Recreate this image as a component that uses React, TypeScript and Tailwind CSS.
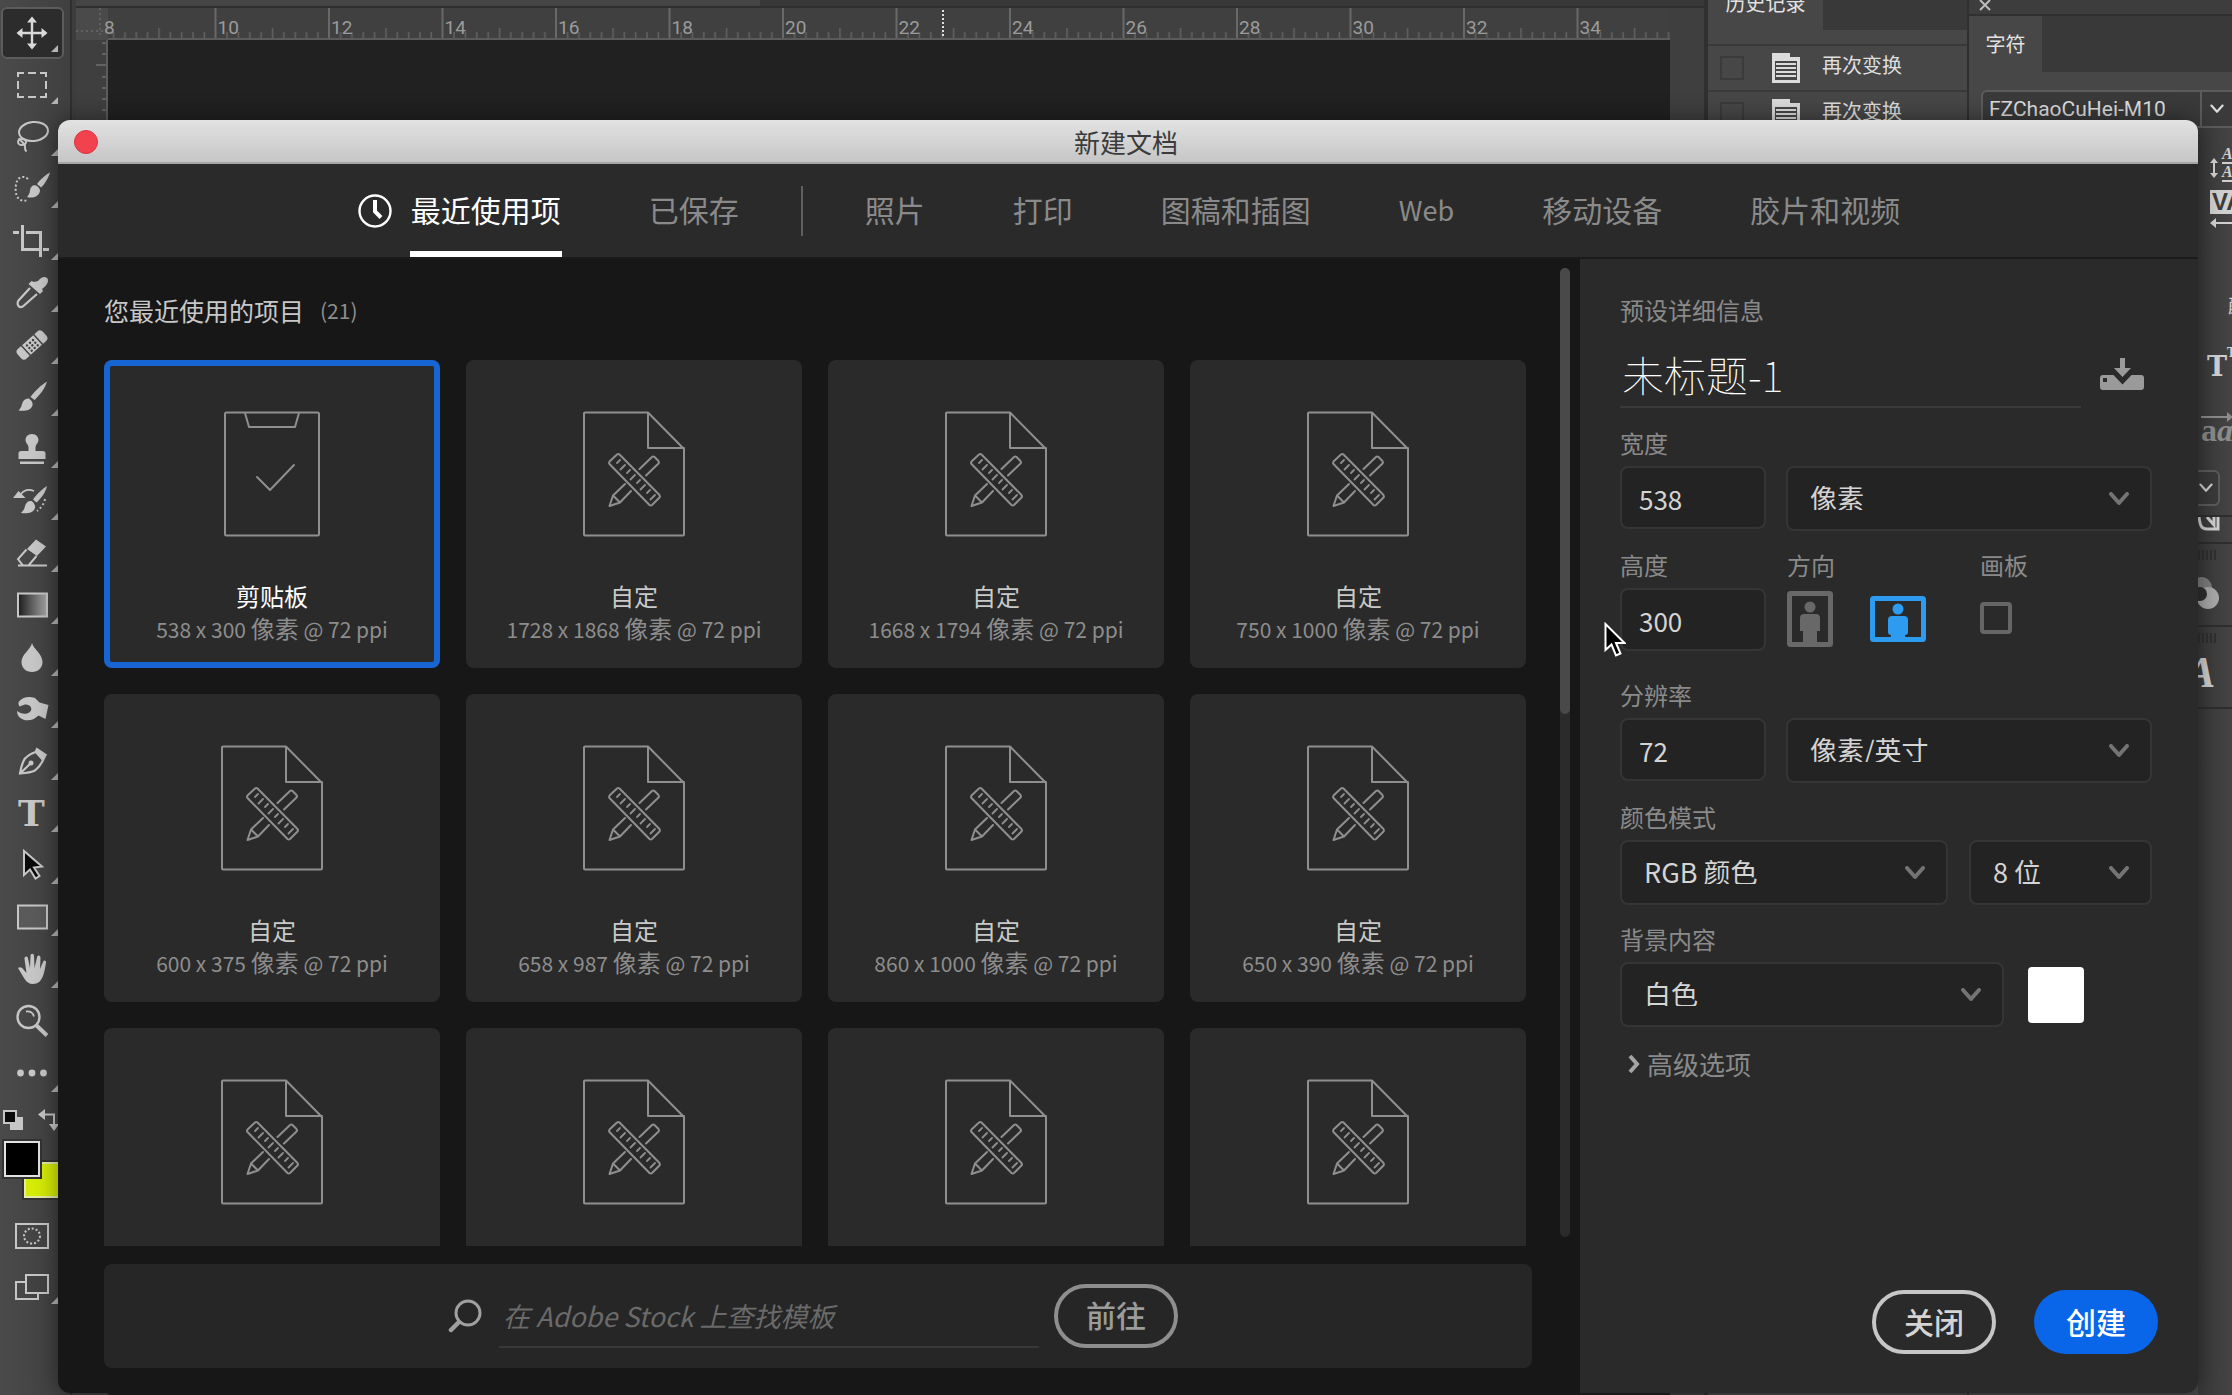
import React from "react";

const CJK = "font-['Noto_Sans_CJK_SC',sans-serif]";

/* ---------- Toolbar icons, each drawn on a 36 x 36 grid ---------- */

const brushTip = (
  <>
    <path d="M36 1.500c-5 2.500-10 7.500-13 11.500l4 3.500C31 13 34.500 6.500 36 1.500z" />
    <path d="M22 14.500c-3-1-5.500 1-6 5-.3 3-1.500 5-3 6.500 5 1.500 12 0 13-6 .2-2-1.500-4.500-4-5.500z" />
  </>
);

const toolIcons: { name: string; art: React.ReactNode }[] = [
  {
    name: "移动工具",
    art: (
      <>
        <path d="M18 4v28M4 18h28" stroke="currentColor" strokeWidth="2.400" />
        <path d="M18 1.500l5 6H13zM18 34.500l5-6H13zM2.500 18l6-5v10zM33.500 18l-6-5v10z" />
      </>
    ),
  },
  {
    name: "矩形选框工具",
    art: (
      <path
        d="M4 10V6h6M14 6h8M26 6h6v4M32 14v8M32 26v4h-6M22 30h-8M10 30H4v-4M4 22v-8"
        fill="none"
        stroke="currentColor"
        strokeWidth="2"
      />
    ),
  },
  {
    name: "套索工具",
    art: (
      <g fill="none" stroke="currentColor" strokeWidth="2">
        <ellipse cx="19.500" cy="12.500" rx="14.500" ry="9.500" transform="rotate(-6 19.500 12.500)" />
        <ellipse cx="8" cy="23" rx="4" ry="3" />
        <path d="M5 19c1 4 7 5 6 9-.3 2 0 3 1.500 4.500" />
      </g>
    ),
  },
  {
    name: "快速选择工具",
    art: (
      <>
        <path
          d="M14 8C11 5 6 5.500 3.500 9 1.500 13 1 19 2.500 24c1.500 5 6 7 11 5"
          fill="none"
          stroke="currentColor"
          strokeWidth="2"
          strokeDasharray="2 2.200"
        />
        {brushTip}
      </>
    ),
  },
  {
    name: "裁剪工具",
    art: (
      <>
        <path d="M8.500 2v24.500H26M12 9.500h14.500V34" fill="none" stroke="currentColor" strokeWidth="3" />
        <path d="M-1 8h6v3h-6zM29 25h6v3h-6z" />
      </>
    ),
  },
  {
    name: "吸管工具",
    art: (
      <>
        <path d="M24 6c3-4 7-5 9-3s1 6-2.500 9l-2.500 2 1 2-3 3L14.500 9l3-3 2.500 1z" />
        <path d="M16 13L4.500 25.500c-1.500 2-1 5 .5 6s3.500.5 5-1L23 19" fill="none" stroke="currentColor" strokeWidth="2.200" />
      </>
    ),
  },
  {
    name: "污点修复画笔工具",
    art: (
      <g transform="rotate(-42 18 18)">
        <path d="M5 11.500h4v13H5a4 4 0 0 1-4-4v-5a4 4 0 0 1 4-4zM27 11.500h4a4 4 0 0 1 4 4v5a4 4 0 0 1-4 4h-4zM10.500 11.500h15v13h-15z" />
        <g fill="#3c3c3c">
          <circle cx="14" cy="15" r="1.200" />
          <circle cx="18" cy="15" r="1.200" />
          <circle cx="22" cy="15" r="1.200" />
          <circle cx="14" cy="18.500" r="1.200" />
          <circle cx="18" cy="18.500" r="1.200" />
          <circle cx="22" cy="18.500" r="1.200" />
          <circle cx="14" cy="22" r="1.200" />
          <circle cx="18" cy="22" r="1.200" />
          <circle cx="22" cy="22" r="1.200" />
        </g>
      </g>
    ),
  },
  {
    name: "画笔工具",
    art: (
      <>
        <path d="M33 2.500C27 6 20 13 16.500 18l4 3C26 16 31.500 8.500 33 2.500z" />
        <path d="M15 19.500c-3.500-.5-6 2-7 5.500-.5 3-2 5-3.500 6.500 5.500 1 12.500 0 14-5 .6-2-.5-5-3.500-7z" />
      </>
    ),
  },
  {
    name: "仿制图章工具",
    art: (
      <path d="M18 3c4 0 6.500 2.800 6.500 6 0 3-2.500 4-3 7v4H29c1.500 0 2.500 1 2.500 2.500V28h-27v-5.500C4.500 21 5.500 20 7 20h7.500v-4c-.5-3-3-4-3-7 0-3.200 2.500-6 6.500-6zM6 30.500h24V33H6z" />
    ),
  },
  {
    name: "历史记录画笔工具",
    art: (
      <>
        <path d="M33 3C28 6 22 12 19 16.500l3.500 3C27.500 15 32 8.500 33 3z" />
        <path d="M17.500 18c-3-.5-5.500 1.500-6.500 5-.5 3-2 5-4 7 5.500 1 12.500 0 14-5 .5-2-.5-5-3.500-7z" />
        <path d="M4.500 8l7 7H-1z" />
        <path d="M7 11c3-4 8-5 13-3" fill="none" stroke="currentColor" strokeWidth="1.800" />
        <path d="M31 16c-1 5-4 9-8 12" fill="none" stroke="currentColor" strokeWidth="2" strokeDasharray="2 2.500" />
      </>
    ),
  },
  {
    name: "橡皮擦工具",
    art: (
      <>
        <path d="M22 4.500l10 7-9 9.500-10-7z" />
        <path d="M12.500 14.500L4 24l5 6.500h5.500l8-9.500M4 30.500h29" fill="none" stroke="currentColor" strokeWidth="2" />
      </>
    ),
  },
  {
    name: "渐变工具",
    art: (
      <>
        <defs>
          <linearGradient id="toolGradient">
            <stop offset="0" stopColor="#1b1b1b" />
            <stop offset="1" stopColor="#a8a8a8" />
          </linearGradient>
        </defs>
        <rect x="4" y="6.500" width="29" height="23" fill="url(#toolGradient)" stroke="currentColor" strokeWidth="2" />
      </>
    ),
  },
  {
    name: "模糊工具",
    art: <path d="M18 4c1.500 6 10.500 11 10.500 19 0 6-4.500 10-10.500 10S7.500 29 7.500 23c0-8 9-12 10.500-19z" />,
  },
  {
    name: "海绵工具",
    art: (
      <path d="M5 10.500C9 5.500 16 5 21 7l4.500 4.500 9 2.500-3 14-7-3.500C20 29 14 30.500 9 28.500c-4-1.500-6-4.500-6-8.500 2.500 2 6.500 3.500 10 2.500s5-3.500 4-6-4.500-3.500-7.500-2.500l-4 1.500c-1-1.500-1.500-3.500-.5-5z" />
    ),
  },
  {
    name: "钢笔工具",
    art: (
      <>
        <path d="M6 30.500c1-6 2-11 5-15 4-4 7-5.500 11-6.500l7 8c-1.500 4-4 7-8 10.500-4 2-9 2.500-15 3zM6 30.500l10-9.500" fill="none" stroke="currentColor" strokeWidth="2.200" />
        <circle cx="17" cy="20" r="2.500" />
        <path d="M22.500 4.500l10.500 7-3 6L20.500 9z" />
      </>
    ),
  },
  { name: "横排文字工具", art: null },
  {
    name: "路径选择工具",
    art: <path d="M10 4v24l6-5.500 5.500 9 4-2.500-5.500-8.500 8-1z" fill="#0a0a0a" stroke="currentColor" strokeWidth="2" />,
  },
  {
    name: "矩形工具",
    art: <rect x="4" y="6.500" width="29" height="23" fill="#5a5a5a" stroke="currentColor" strokeWidth="2" />,
  },
  {
    name: "抓手工具",
    art: (
      <path d="M4 17c1.500-1.500 4-.5 5.500 1.500l3 3.500L10.500 8c-.3-3 3-3.500 3.500-.5L16 17l.5-12c0-3 3.500-3 3.500 0l.5 12L23 6.500c.5-3 3.700-2.500 3.500.5L26 18l3-7c1-2.500 3.500-1.800 3 1-1 5-1.500 9-3 13-2 5-5 8-10 8-4 0-6.500-2-9-6-2-3-4-7-6-10z" />
    ),
  },
  {
    name: "缩放工具",
    art: (
      <g fill="none" stroke="currentColor">
        <circle cx="14.500" cy="14" r="11" strokeWidth="2.400" />
        <path d="M12 8.500c4-.5 7 1.500 8 5" strokeWidth="1.800" />
        <path d="M22.500 22.500L33 32.500" strokeWidth="4" />
      </g>
    ),
  },
  {
    name: "编辑工具栏",
    art: (
      <>
        <circle cx="6.500" cy="18" r="3.400" />
        <circle cx="18" cy="18" r="3.400" />
        <circle cx="29.500" cy="18" r="3.400" />
      </>
    ),
  },
];

const noFlyout = new Set(["缩放工具"]);

function Toolbar() {
  return (
    <aside className="flex w-[72px] shrink-0 flex-col border-r-2 border-[#2f2f2f] bg-linear-to-r from-[#4a4a4a] to-[#404040] pt-[7px]">
      {toolIcons.map(({ name, art }, i) => (
        <button
          key={name}
          aria-label={name}
          className={
            i === 0
              ? "relative mx-px flex h-[52px] w-[63px] items-center justify-center rounded-md border-2 border-[#5c5c5c] bg-[#2c2c2c] pr-0.5 text-[#d9d9d9]"
              : "relative mx-px flex h-[52px] w-[63px] items-center justify-center border-2 border-transparent pr-0.5 text-[#c6c6c6]"
          }
        >
          {art ? (
            <svg viewBox="0 0 36 36" className="size-9 overflow-visible" fill="currentColor">
              {art}
            </svg>
          ) : (
            <span className="font-['DejaVu_Serif',serif] text-4xl leading-9 font-bold">T</span>
          )}
          {!noFlyout.has(name) && (
            <svg viewBox="0 0 7 7" className="absolute right-[4px] bottom-[5px] size-[7px]" fill="#b5b5b5">
              <path d="M7 0v7H0z" />
            </svg>
          )}
        </button>
      ))}
      <div className="flex h-[42px] w-[60px] items-center justify-between pl-[3px] text-[#c6c6c6]">
        <button aria-label="默认前景色和背景色">
          <svg viewBox="0 0 20 20" className="size-5">
            <rect x="7" y="7" width="13" height="13" fill="#c6c6c6" />
            <rect x="1" y="1" width="12" height="12" fill="#0a0a0a" stroke="#c6c6c6" strokeWidth="2" />
          </svg>
        </button>
        <button aria-label="切换前景色和背景色">
          <svg viewBox="0 0 22 22" className="size-[22px]" fill="currentColor">
            <path d="M6 5.500h10V16" fill="none" stroke="currentColor" strokeWidth="2" />
            <path d="M0 5.500L7 0v11zM16 22l-5-7h10z" />
          </svg>
        </button>
      </div>
      <div className="relative h-[57px] w-[60px]">
        <button aria-label="背景色" className="absolute right-0 bottom-0 size-9 border-2 border-[#e6eaa8] bg-[#d6ec07] outline-2 outline-[#333333]" />
        <button aria-label="前景色" className="absolute top-0 left-1 size-9 border-2 border-[#e2e2e2] bg-black outline-2 outline-[#333333]" />
      </div>
      <button aria-label="以快速蒙版模式编辑" className="mt-[25px] ml-[15px] flex h-[26px] w-[34px] items-center justify-center border-2 border-[#c6c6c6]">
        <svg viewBox="0 0 20 18" className="h-[18px] w-5">
          <ellipse cx="10" cy="9" rx="8" ry="7.500" fill="none" stroke="#c6c6c6" strokeWidth="2" strokeDasharray="2 2" />
        </svg>
      </button>
      <button aria-label="更改屏幕模式" className="relative mt-[25px] ml-[15px] w-[43px]">
        <svg viewBox="0 0 34 26" className="h-[26px] w-[34px]" stroke="#c6c6c6" strokeWidth="2">
          <rect x="1" y="8" width="22" height="17" fill="none" />
          <rect x="11" y="1" width="22" height="18" fill="#424242" />
        </svg>
        <svg viewBox="0 0 7 7" className="absolute right-0 -bottom-1 size-[7px]" fill="#b5b5b5">
          <path d="M7 0v7H0z" />
        </svg>
      </button>
    </aside>
  );
}

/* ---------- Document area ---------- */

const marks = [8, 10, 12, 14, 16, 18, 20, 22, 24, 26, 28, 30, 32, 34];
const MARK_STEP = 113.500;

function Ruler() {
  return (
    <svg className="block h-8 w-full" height="32">
      <defs>
        <pattern id="rulerTicks" x="25.500" width={MARK_STEP} height="32" patternUnits="userSpaceOnUse">
          {[1, 2, 3, 4, 5, 6, 7, 8, 9].map((n) => (
            <rect key={n} x={n * 11.350} y={n === 5 ? 20 : 24} width="1.500" height={n === 5 ? 10 : 6} fill="#626262" />
          ))}
        </pattern>
      </defs>
      <rect width="100%" height="32" fill="#404040" />
      <rect width="32" height="32" fill="#4a4a4a" />
      <path d="M0 23h30M24 0v30" stroke="#6a6a6a" strokeWidth="1.500" strokeDasharray="2 3" />
      <rect x="32" width="100%" height="32" fill="url(#rulerTicks)" />
      <rect x="32" y="30" width="100%" height="2" fill="#5b5b5b" />
      {marks.map((n, i) => (
        <g key={n}>
          {i > 0 && <rect x={25 + i * MARK_STEP} width="2" height="30" fill="#686868" />}
          <text x={28 + i * MARK_STEP} y="26" fill="#9b9b9b" fontSize="19" fontFamily="Roboto, sans-serif">
            {n}
          </text>
        </g>
      ))}
      <path d="M867 2v26" stroke="#e0e0e0" strokeWidth="2" strokeDasharray="2 2" />
    </svg>
  );
}

function Workspace() {
  return (
    <main className="flex min-w-0 flex-1 flex-col border-l-4 border-[#3d3d3d] bg-[#3f3f3f]">
      <div className="flex h-[8px] border-b-2 border-[#2e2e2e] bg-[#383838]">
        <div className="w-[42%] bg-[#454545]" />
      </div>
      <div className="flex min-h-0 flex-1 pr-[34px]">
        <div className="min-w-0 flex-1 overflow-hidden">
          <Ruler />
          <div className="flex h-full">
            <svg className="h-[120px] w-[32px]" viewBox="0 0 32 120">
              <path d="M26 3h6M26 14h6M20 25h12M26 37h6M26 48h6M26 59h6M26 70h6" stroke="#626262" strokeWidth="2" />
              <path d="M31 0v120" stroke="#5b5b5b" strokeWidth="2" />
            </svg>
            <div className="flex-1 bg-[#212121]" />
          </div>
        </div>
      </div>
    </main>
  );
}

function HistoryPanel() {
  return (
    <section className="flex w-[263px] shrink-0 flex-col border-l-4 border-[#303030] bg-[#474747]">
      <div className="flex h-[30px] bg-[#393939]">
        <h2 className="flex w-[115px] justify-center bg-[#474747] text-xl leading-[6px] text-[#e2e2e2]">历史记录</h2>
      </div>
      <ul className="mt-[14px]">
        {[0, 1].map((n) => (
          <li key={n} className="flex h-[46px] items-center border-t-2 border-[#393939] pl-3 text-xl text-[#dedede]">
            <span className="size-6 border-2 border-[#3b3b3b]" />
            <svg viewBox="0 0 28 30" className="ml-7 h-[30px] w-7">
              <path d="M0 0h18v4h10v26H0z" fill="#dcdcdc" />
              <path d="M3 8h22v19H3z" fill="#474747" />
              <path d="M4 11h20M4 15h20M4 19h20M4 23h20" stroke="#dcdcdc" strokeWidth="2" />
            </svg>
            <span className="mb-1.5 ml-[22px] leading-6">再次变换</span>
          </li>
        ))}
      </ul>
    </section>
  );
}

function Chevron({ className, width = 3 }: { className: string; width?: number }) {
  return (
    <svg viewBox="0 0 20 14" className={className} fill="none" stroke="currentColor" strokeWidth={width} strokeLinecap="round" strokeLinejoin="round">
      <path d="M2 2l8 9 8-9" />
    </svg>
  );
}

const grips = (
  <svg viewBox="0 0 20 10" className="h-[10px] w-5">
    <path d="M1 0v10M5 0v10M9 0v10M13 0v10M17 0v10" stroke="#303030" strokeWidth="2" />
  </svg>
);

function CharacterPanel() {
  return (
    <section className="flex w-[265px] shrink-0 flex-col overflow-hidden border-l-2 border-[#303030] bg-[#474747]">
      <button aria-label="关闭面板" className="flex h-4 items-start border-b-2 border-[#303030] bg-[#3d3d3d] pl-[10px] text-[#bdbdbd]">
        <svg viewBox="0 0 12 12" className="size-3" stroke="currentColor" strokeWidth="2">
          <path d="M1 0l10 10M11 0L1 10" />
        </svg>
      </button>
      <div className="flex h-[56px] bg-[#393939]">
        <h2 className="flex w-[73px] items-center justify-center bg-[#474747] text-xl text-[#e2e2e2]">字符</h2>
      </div>
      <div className="mt-[18px] ml-3 flex h-[38px] w-[280px] shrink-0 items-center rounded-md border-2 border-[#5c5c5c] bg-[#3a3a3a] text-[#dedede]">
        <input aria-label="字体" defaultValue="FZChaoCuHei-M10" className="w-[219px] border-r-2 border-[#5c5c5c] bg-transparent pl-1.5 font-['Roboto',sans-serif] text-[21px] leading-[34px]" />
        <Chevron className="ml-2 h-[10px] w-[14px]" width={3} />
      </div>
      <div className="flex w-[34px] flex-1 flex-col self-end bg-linear-to-r from-[#3a3a3a] to-[#444444] text-[#d0d0d0]">
        <div className="mt-[18px] ml-3 flex h-[36px]">
          <svg viewBox="0 0 8 20" className="mt-3 h-5 w-2 shrink-0" fill="currentColor">
            <path d="M4 3v14" stroke="currentColor" strokeWidth="2" />
            <path d="M4 0l4 5H0zM4 20l4-5H0z" />
          </svg>
          <div className="ml-1 flex flex-col font-['Liberation_Serif',serif] text-base leading-[18px] font-bold italic">
            <span className="h-[18px] w-6 border-b-2 border-[#d0d0d0] leading-4">A</span>
            <span className="h-[18px] w-6 border-b-2 border-[#d0d0d0] leading-4">A</span>
          </div>
        </div>
        <div className="mt-[8px] ml-3 w-10 bg-[#d0d0d0] pl-0.5 font-['Liberation_Sans',sans-serif] text-2xl leading-6 font-bold text-[#3c3c3c]">VA</div>
        <svg viewBox="0 0 22 10" className="mt-1 ml-3 h-[10px] w-[22px]" fill="currentColor">
          <path d="M4 5h18" stroke="currentColor" strokeWidth="2" />
          <path d="M0 5l6-5v10z" />
        </svg>
        <div className="mt-[65px] ml-[30px] w-10 text-xl leading-6">颜色</div>
        <div className="mt-[32px] ml-[9px] flex w-12 font-['DejaVu_Serif',serif] text-[27px] leading-[36px] font-bold">
          T<sup className="text-xs leading-5">T</sup>
        </div>
        <svg viewBox="0 0 32 10" className="mt-[27px] ml-[3px] h-[10px] w-8 shrink-0" fill="#8c8c8c">
          <path d="M0 5h28" stroke="#8c8c8c" strokeWidth="2" />
          <path d="M32 5l-6-5v10z" />
        </svg>
        <div className="ml-[3px] w-10 font-['Liberation_Serif',serif] text-[32px] leading-[16px] font-bold text-[#8c8c8c]">
          a<i>a</i>
        </div>
        <div className="mt-[32px] flex h-9 w-[22px] items-center rounded-r-md border-2 border-l-0 border-[#5c5c5c] bg-[#3a3a3a]">
          <Chevron className="ml-px h-[10px] w-[14px]" width={3} />
        </div>
        <div className="mt-[9px] h-[29px] border-y-2 border-[#2e2e2e]">
          <svg viewBox="0 0 22 14" className="h-[14px] w-[22px]" fill="none" stroke="#d0d0d0" strokeWidth="3">
            <path d="M1 0c1 8 2 12 8 12h11V0M9 0l7 8V0" />
          </svg>
        </div>
        <div className="flex h-[83px] flex-col border-b-2 border-[#2e2e2e] pt-[6px]">
          {grips}
          <svg viewBox="0 0 22 34" className="mt-[16px] h-[34px] w-[22px]">
            <circle cx="3" cy="12" r="11" fill="#7d7d7d" />
            <circle cx="10" cy="22" r="11" fill="#a9a9a9" />
            <circle cx="2" cy="18" r="7" fill="#2f2f2f" />
          </svg>
        </div>
        <div className="flex h-[82px] flex-col border-b-2 border-[#2e2e2e] pt-[6px]">
          {grips}
          <span className="-ml-3 pt-2 font-['Liberation_Serif',serif] text-[44px] leading-[44px] font-bold italic">A</span>
        </div>
      </div>
    </section>
  );
}

/* ---------- New document dialog ---------- */

const tabs = ["照片", "打印", "图稿和插图", "Web", "移动设备", "胶片和视频"];

function Tabs() {
  return (
    <nav className="flex h-[95px] shrink-0 items-stretch justify-center border-b-2 border-[#1b1b1b] bg-[#2a2a2a] pl-[2px] text-[30px] leading-none text-[#8a8a8a]">
      <button className="flex items-stretch gap-[18px] text-white">
        <svg viewBox="0 0 34 34" className="h-[34px] w-[34px] self-center" fill="none" stroke="currentColor">
          <circle cx="17" cy="17" r="15.500" strokeWidth="2.400" />
          <path d="M17 6v11.500l6 6" strokeWidth="4" />
        </svg>
        <span className="flex items-center border-b-[6px] border-white px-px pt-[2px]">最近使用项</span>
      </button>
      <button className="ml-[87px] pb-[3px]">已保存</button>
      <span className="mx-[62px] h-[50px] w-[2px] self-center bg-[#5f5f5f]" />
      <div className="flex gap-[88px]">
        {tabs.map((t) => (
          <button key={t} className={t === "Web" ? "pb-[3px] text-[27px]" : "pb-[3px]"}>
            {t}
          </button>
        ))}
      </div>
    </nav>
  );
}

function ClipboardArt() {
  return (
    <svg viewBox="0 0 96 126" className="h-[126px] w-24" fill="none" stroke="#8f8f8f" strokeWidth="2" strokeLinejoin="round">
      <rect x="1" y="1.500" width="94" height="123" rx="1.500" />
      <path d="M21 2l4 14h46l4-14" />
      <path d="M33 66l13 13 24-25" strokeLinecap="round" />
    </svg>
  );
}

function DocumentArt() {
  return (
    <svg viewBox="0 0 104 126" className="h-[126px] w-[104px]" fill="none" stroke="#8f8f8f" strokeWidth="2" strokeLinejoin="round" strokeLinecap="round">
      <path d="M66 1.500H3a1 1 0 0 0-1 1v121a1 1 0 0 0 1 1h98a1 1 0 0 0 1-1V38zM66 1.500V37h36" />
      <path d="M27.500 50.500l7.500-7a2 2 0 0 1 2.500 0L77.500 84a2 2 0 0 1 0 2.500l-7.500 7.500a2 2 0 0 1-2.500 0L27.500 53a2 2 0 0 1 0-2.500z" />
      <path d="M38 49l-3 3M43 54l-4.500 4.500M48 59l-3 3M53 64l-4.500 4.500M58 69l-3 3M63 74l-4.500 4.500M68 79l-3 3M73 84l-4.500 4.500" strokeWidth="1.800" />
      <path d="M57.500 58L70 46a2 2 0 0 1 2.500 0l4 4a2 2 0 0 1 0 2.500L64 64.500M43 73L31 84.500 27.500 95 38 91.500l11-11.500M31 84.500l7 7" />
    </svg>
  );
}

const presets: [string, string][] = [
  ["剪贴板", "538 x 300"],
  ["自定", "1728 x 1868"],
  ["自定", "1668 x 1794"],
  ["自定", "750 x 1000"],
  ["自定", "600 x 375"],
  ["自定", "658 x 987"],
  ["自定", "860 x 1000"],
  ["自定", "650 x 390"],
  ["自定", ""],
  ["自定", ""],
  ["自定", ""],
  ["自定", ""],
];

function PresetCard({ name, size, selected }: { name: string; size: string; selected: boolean }) {
  return (
    <button
      className={
        selected
          ? "flex h-[308px] flex-col items-center rounded-lg bg-[#2a2a2a] pt-[51px] text-white ring-[6px] ring-[#1665d2] ring-inset"
          : "flex h-[308px] flex-col items-center rounded-lg bg-[#2a2a2a] pt-[51px] text-[#c9c9c9]"
      }
    >
      {selected ? <ClipboardArt /> : <DocumentArt />}
      {size && (
        <>
          <span className="mt-[43px] text-2xl leading-8">{name}</span>
          <span className="text-[21px] leading-8 whitespace-nowrap text-[#8d8d8d]">
            {size} <span className="text-2xl leading-8">像素</span> @ 72 ppi
          </span>
        </>
      )}
    </button>
  );
}

function PresetBrowser() {
  return (
    <div className="flex min-w-0 flex-1 bg-[#171717] pr-[10px] pl-[46px]">
      <div className="flex min-w-0 flex-1 flex-col">
        <h2 className="mt-[37px] mb-[36px] flex items-center gap-4 text-[25px] leading-7 text-[#c8c8c8]">
          您最近使用的项目 <span className="text-[21px] text-[#8f8f8f]">(21)</span>
        </h2>
        <div className="min-h-0 flex-1 overflow-hidden pr-[6px]">
          <div className="grid grid-cols-4 gap-[26px]">
            {presets.map(([name, size], i) => (
              <PresetCard key={i} name={name} size={size} selected={i === 0} />
            ))}
          </div>
        </div>
        <form className="mt-[18px] mb-[25px] flex h-[104px] shrink-0 items-center justify-center rounded-lg bg-[#262626] pr-[10px]">
          <svg viewBox="0 0 34 34" className="size-[34px]" fill="none" stroke="#a0a0a0" strokeLinecap="round">
            <circle cx="20" cy="14" r="12" strokeWidth="3" />
            <path d="M11 23l-8 8" strokeWidth="4.500" />
          </svg>
          <input
            aria-label="在 Adobe Stock 上查找模板"
            placeholder="在 Adobe Stock 上查找模板"
            className="ml-[17px] h-[64px] w-[540px] border-b-2 border-[#383838] bg-transparent pl-1 text-[27px] leading-9 italic placeholder:text-[#6a6a6a]"
          />
          <button type="button" className="ml-[15px] h-[64px] w-[124px] rounded-full border-4 border-[#8e8e8e] pb-1 text-3xl leading-none font-medium text-[#9c9c9c]">
            前往
          </button>
        </form>
      </div>
      <div className="mt-[9px] mb-[156px] ml-[28px] w-[10px] rounded-full bg-[#2b2b2b]">
        <div className="h-[46%] rounded-full bg-[#494949]" />
      </div>
    </div>
  );
}

const box = "h-[63px] rounded-lg border-2 border-[#353535] bg-[#232323] pt-0.5 pl-[17px] text-[26px] text-[#d4d4d4]";

function Select({ id, label, value, className }: { id: string; label?: string; value: string; className: string }) {
  return (
    <div className={className}>
      <select
        id={id}
        aria-label={label}
        className="h-[65px] w-full appearance-none rounded-lg border-2 border-[#353535] bg-[#232323] pr-14 pb-0.5 pl-[22px] text-[27px] text-[#d4d4d4]"
      >
        <option>{value}</option>
      </select>
      <Chevron className="pointer-events-none absolute top-[26px] right-[23px] h-[14px] w-5 text-[#747474]" width={4} />
    </div>
  );
}

function Details() {
  return (
    <aside className="flex w-[618px] shrink-0 flex-col bg-[#2a2a2a] pr-[46px] pb-[39px] pl-[40px] text-2xl leading-6 text-[#8a8a8a]">
      <h2 className="mt-[39px]">预设详细信息</h2>
      <div className="mt-[18px] flex items-center">
        <input aria-label="文档名称" defaultValue="未标题-1" className="h-[68px] w-[461px] border-b-2 border-[#3a3a3a] bg-transparent pl-[2px] text-[42px] leading-[60px] font-thin text-white" />
        <button aria-label="保存文档预设" className="ml-[19px] text-[#9a9a9a]">
          <svg viewBox="0 0 44 32" className="h-8 w-11" fill="currentColor">
            <path d="M20 0h5v10h6l-8.500 9L14 10h6z" />
            <path d="M3 17h10.500l9 9.500 9-9.500H41a3 3 0 0 1 3 3v9a3 3 0 0 1-3 3H3a3 3 0 0 1-3-3v-9a3 3 0 0 1 3-3z" />
            <rect x="3" y="20" width="4" height="4" fill="#2a2a2a" />
          </svg>
        </button>
      </div>

      <label htmlFor="width" className="mt-[23px]">宽度</label>
      <div className="mt-[11px] flex h-[65px] justify-between">
        <input id="width" defaultValue="538" className={box + " w-[146px]"} />
        <Select id="unit" label="单位" value="像素" className="relative w-[366px]" />
      </div>

      <div className="mt-[22px] flex">
        <label htmlFor="height" className="w-[167px]">高度</label>
        <span className="w-[193px]">方向</span>
        <label htmlFor="artboard">画板</label>
      </div>
      <div className="mt-[11px] flex h-[65px]">
        <input id="height" defaultValue="300" className={box + " w-[146px]"} />
        <button aria-label="纵向" className="ml-[21px] self-center pb-1 text-[#686868]">
          <svg viewBox="0 0 46 56" className="h-14 w-[46px]" fill="currentColor">
            <rect x="2.500" y="2.500" width="41" height="51" rx="1" fill="none" stroke="currentColor" strokeWidth="5" />
            <circle cx="23" cy="16" r="5.500" />
            <path d="M17 23h12a4 4 0 0 1 4 4v13h-3v14H16V40h-3V27a4 4 0 0 1 4-4z" />
          </svg>
        </button>
        <button aria-label="横向" className="ml-[37px] self-center pb-1 text-[#2d9bf0]">
          <svg viewBox="0 0 56 46" className="h-[46px] w-14" fill="currentColor">
            <rect x="2.500" y="2.500" width="51" height="41" rx="1" fill="none" stroke="currentColor" strokeWidth="5" />
            <circle cx="28" cy="13" r="5.500" />
            <path d="M22 20h12a4 4 0 0 1 4 4v12c0 2-1 3-3 3l1 5H20l1-5c-2 0-3-1-3-3V24a4 4 0 0 1 4-4z" />
          </svg>
        </button>
        <input id="artboard" type="checkbox" className="mt-[14px] ml-[54px] size-8 appearance-none rounded-[4px] border-4 border-[#666666]" />
      </div>

      <label htmlFor="resolution" className="mt-[30px]">分辨率</label>
      <div className="mt-[11px] flex h-[65px] justify-between">
        <input id="resolution" defaultValue="72" className={box + " w-[146px]"} />
        <Select id="resolution-unit" label="分辨率单位" value="像素/英寸" className="relative w-[366px]" />
      </div>

      <label htmlFor="mode" className="mt-[22px]">颜色模式</label>
      <div className="mt-[11px] flex justify-between">
        <Select id="mode" value="RGB 颜色" className="relative w-[328px]" />
        <Select id="depth" label="位深度" value="8 位" className="relative w-[183px]" />
      </div>

      <label htmlFor="background" className="mt-[22px]">背景内容</label>
      <div className="mt-[11px] flex items-center">
        <Select id="background" value="白色" className="relative w-[384px]" />
        <button aria-label="背景颜色" className="ml-[24px] size-14 rounded-[4px] bg-white" />
      </div>

      <button className="mt-[24px] flex items-center gap-[7px] self-start pl-[8px] text-[26px] leading-[26px]">
        <svg viewBox="0 0 12 20" className="h-5 w-3" fill="none" stroke="#a5a5a5" strokeWidth="4">
          <path d="M2 2l7 8-7 8" />
        </svg>
        高级选项
      </button>

      <div className="mt-auto -mr-[6px] flex justify-end gap-[38px] text-3xl leading-none font-medium">
        <button className="h-[64px] w-[124px] rounded-full border-4 border-[#c6c6c6] pb-[3px] text-[#d4d4d4]">关闭</button>
        <button className="h-[64px] w-[124px] rounded-full bg-[#0a66e8] pb-[3px] text-white">创建</button>
      </div>
    </aside>
  );
}

function NewDocumentDialog() {
  return (
    <div
      role="dialog"
      aria-label="新建文档"
      className="absolute top-[120px] right-[34px] bottom-[2px] left-[58px] flex flex-col overflow-hidden rounded-xl shadow-[0_0_24px_rgba(0,0,0,0.45)]"
    >
      <header className="relative flex h-[44px] shrink-0 items-center justify-center border-b-2 border-[#a5a5a5] bg-linear-to-b from-[#e2e2e2] to-[#c6c6c6] pt-0.5 pr-1">
        <button aria-label="关闭窗口" className="absolute left-4 size-6 rounded-full border border-[#d93641] bg-[#f2424e]" />
        <h1 className="text-[26px] leading-8 text-[#3b3b3b]">新建文档</h1>
      </header>
      <Tabs />
      <div className="flex min-h-0 flex-1">
        <PresetBrowser />
        <Details />
      </div>
    </div>
  );
}

function Pointer() {
  return (
    <svg viewBox="0 0 22 36" className="pointer-events-none absolute top-[622px] left-[1604px] h-9 w-[22px]">
      <path d="M1.500 2v26l6-5.500 4.500 11 4.500-2-4.500-10.500h8.500z" fill="#000" stroke="#fff" strokeWidth="2" />
    </svg>
  );
}

export default function App() {
  return (
    <div className={CJK + " relative h-screen overflow-hidden bg-[#3f3f3f]"}>
      <div className="flex h-full">
        <Toolbar />
        <Workspace />
        <HistoryPanel />
        <CharacterPanel />
      </div>
      <NewDocumentDialog />
      <Pointer />
    </div>
  );
}
